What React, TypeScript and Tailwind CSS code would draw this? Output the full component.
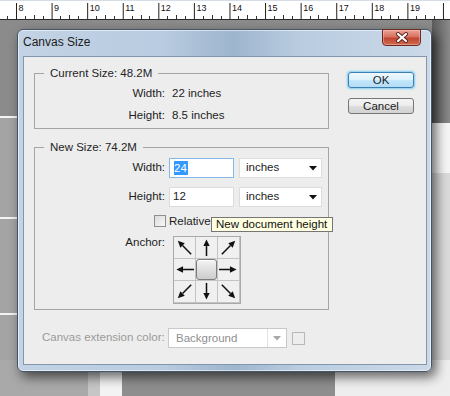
import React from 'react';

// ruler across the top of the document window
function Ruler() {
	const marks: React.ReactNode[] = [];
	for (let n = 7; n <= 20; n++) {
		const x = 16 + (n - 8) * 35.58;
		marks.push(<line key={`m${n}`} x1={x + 0.5} y1={3} x2={x + 0.5} y2={19} stroke="#222" strokeWidth={1} />);
		if (n >= 8 && n <= 19) {
			marks.push(
				<text key={`t${n}`} x={x + 2.5} y={11} fontSize={9} fill="#111" fontFamily="Liberation Sans, Arial, sans-serif">
					{n}
				</text>
			);
		}
		for (let q = 1; q <= 3; q++) {
			const mx = Math.round(x + q * 8.9) + 0.5;
			marks.push(<line key={`q${n}-${q}`} x1={mx} y1={q === 2 ? 15 : 16} x2={mx} y2={19} stroke="#333" strokeWidth={1} />);
		}
	}
	return (
		<div className="h-[20px] bg-white border-t border-[#d6dde6] border-b border-b-[#2a2a2a]">
			<svg width={450} height={18} viewBox="0 1 450 18" className="block">
				{marks}
			</svg>
		</div>
	);
}

// arrow drawn from tail to tip inside a 22x22 anchor cell
function Arrow({ tail, tip }: { tail: [number, number]; tip: [number, number] }) {
	const dx = tip[0] - tail[0];
	const dy = tip[1] - tail[1];
	const len = Math.hypot(dx, dy);
	const ux = dx / len;
	const uy = dy / len;
	const bx = tip[0] - ux * 7;
	const by = tip[1] - uy * 7;
	const nx = -uy * 3.3;
	const ny = ux * 3.3;
	return (
		<svg width="100%" height="100%" viewBox="0 0 22 22" className="block">
			<line x1={tail[0]} y1={tail[1]} x2={bx} y2={by} stroke="#111" strokeWidth={1.6} />
			<polygon points={`${tip[0]},${tip[1]} ${bx + nx},${by + ny} ${bx - nx},${by - ny}`} fill="#111" />
		</svg>
	);
}

type Pt = [number, number];

const cells: ([Pt, Pt] | null)[] = [
	[[18, 18], [4, 4]],
	[[11, 20], [11, 2.5]],
	[[4, 18], [18, 4]],
	[[21, 11], [2.5, 11]],
	null,
	[[1, 11], [19.5, 11]],
	[[18, 4], [4, 18]],
	[[11, 2], [11, 19.5]],
	[[4, 4], [18, 18]],
];

function AnchorGrid() {
	return (
		<div className="grid grid-cols-3 grid-rows-3 w-[68px] h-[68px] border border-[#a9a9a9] bg-[#f0f0f0]">
			{cells.map((c, i) => (
				<div key={i} className="border-r border-b border-[#c4c4c4] flex items-center justify-center">
					{c ? (
						<Arrow tail={c[0]} tip={c[1]} />
					) : (
						<div className="w-[21px] h-[21px] rounded-[3px] border border-[#7d7d7d] bg-[linear-gradient(#f4f4f4,#dcdcdc_60%,#cdcdcd)] shadow-[inset_0_1px_0_#ffffff]" />
					)}
				</div>
			))}
		</div>
	);
}

function DropArrow({ color = '#111' }: { color?: string }) {
	return (
		<svg width="8" height="5" viewBox="0 0 8 5" className="block">
			<polygon points="0,0 8,0 4,4.5" fill={color} />
		</svg>
	);
}

function CloseButton() {
	return (
		<div className="-mt-px mr-[6px] w-[39px] h-[17px] rounded-b-[4px] border border-[#6b2a22] bg-[linear-gradient(#eba497,#d7705f_45%,#c24632_55%,#cf6b4f)] shadow-[inset_0_0_0_1px_rgba(255,200,190,0.45)] flex items-center justify-center">
			<svg width="14" height="11" viewBox="0 0 14 11">
				<path d="M3 2 L11 9 M11 2 L3 9" stroke="#5a2520" strokeWidth={4} strokeLinecap="round" />
				<path d="M3 2 L11 9 M11 2 L3 9" stroke="#ffffff" strokeWidth={2.2} strokeLinecap="round" />
			</svg>
		</div>
	);
}

function Dialog() {
	return (
		<div className="absolute left-[17px] top-[29px] w-[415px] h-[343px] rounded-[6px] border border-[#44566a] bg-[linear-gradient(90deg,#c3d3e5_0%,#b8cbe0_35%,#9eb5ce_52%,#b9cce0_68%,#cbd9e8_100%)] shadow-[inset_0_0_0_1px_rgba(255,255,255,0.55),4px_5px_12px_rgba(0,0,0,0.6)] flex flex-col px-[5px] pb-[6px] pr-[4px]">
			{/* Title bar */}
			<div className="h-[26px] flex items-start justify-between shrink-0">
				<span className="mt-[5px] text-[12px] leading-[14px] text-[#1b1b1b]">Canvas Size</span>
				<CloseButton />
			</div>

			{/* Body */}
			<div className="flex-1 bg-[#ededed] border border-[#8297ad] flex text-[11.5px] text-[#1d1d1d]">
				<div className="pl-[10px] w-[305px] shrink-0">
					{/* Current size */}
					<div className="relative mt-[16px] w-[295px] h-[56px] border border-[#a5a5a5]">
						<span className="absolute left-[9px] -top-[8px] px-[6px] bg-[#ededed] leading-[14px] text-[#252525]">
							Current Size: 48.2M
						</span>
						<div className="pt-[8px] grid grid-cols-[130px_auto] gap-x-[7px] leading-[22px]">
							<span className="text-right">Width:</span>
							<span>22 inches</span>
							<span className="text-right">Height:</span>
							<span>8.5 inches</span>
						</div>
					</div>

					{/* New size */}
					<div className="relative mt-[18px] w-[295px] h-[163px] border border-[#a5a5a5]">
						<span className="absolute left-[9px] -top-[8px] px-[6px] bg-[#ededed] leading-[14px] text-[#252525]">
							New Size: 74.2M
						</span>
						<div className="pt-[10px]">
							<div className="flex items-center h-[20px]">
								<span className="w-[130px] text-right">Width:</span>
								<div className="ml-[4px] w-[65px] h-[20px] border border-[#86b8e6] bg-white flex items-center pl-[4px]">
									<span className="bg-[#3399ff] text-white leading-[14px] pr-[1px]">24</span>
								</div>
								<div className="ml-[5px] w-[83px] h-[20px] border border-[#dcdcdc] bg-white flex items-center justify-between pl-[6px] pr-[4px]">
									<span>inches</span>
									<DropArrow />
								</div>
							</div>
							<div className="flex items-center h-[20px] mt-[9px]">
								<span className="w-[130px] text-right">Height:</span>
								<div className="ml-[4px] w-[65px] h-[20px] border border-[#dcdcdc] bg-white flex items-center pl-[3px]">
									<span>12</span>
								</div>
								<div className="ml-[5px] w-[83px] h-[20px] border border-[#dcdcdc] bg-white flex items-center justify-between pl-[6px] pr-[4px]">
									<span>inches</span>
									<DropArrow />
								</div>
							</div>
							<div className="flex items-center h-[14px] mt-[7px] pl-[119px]">
								<div className="w-[12px] h-[12px] border border-[#8e8f8f] bg-[linear-gradient(135deg,#dcdcdc,#f7f7f7)]" />
								<span className="ml-[3px] leading-[14px]">Relative</span>
							</div>
							<div className="flex items-start mt-[8px]">
								<span className="w-[130px] text-right leading-[12px]">Anchor:</span>
								<div className="ml-[8px]">
									<AnchorGrid />
								</div>
							</div>
						</div>

						{/* Tooltip */}
						<div className="absolute left-[176px] top-[69px] w-[122px] h-[15px] border border-[#767676] bg-[#ffffe1] pl-[4px] leading-[13px] text-[11.5px] text-[#111] whitespace-nowrap z-10">
							New document height
						</div>
					</div>

					{/* Canvas extension color */}
					<div className="mt-[18px] h-[20px] flex items-center">
						<span className="ml-[8px] w-[126px] shrink-0 text-[#9b9b9b] whitespace-nowrap">Canvas extension color:</span>
						<div className="w-[119px] h-[20px] border border-[#c8c8c8] bg-white flex">
							<span className="flex-1 pl-[7px] leading-[18px] text-[#8f8f8f]">Background</span>
							<div className="w-[19px] border-l border-[#e2e2e2] flex items-center justify-center">
								<DropArrow color="#a8a8a8" />
							</div>
						</div>
						<div className="ml-[5px] w-[13px] h-[13px] border border-[#b8b8b8]" />
					</div>
				</div>

				{/* Buttons */}
				<div className="ml-[19px] mt-[15px] flex flex-col">
					<div className="w-[66px] h-[16px] rounded-[3px] border border-[#3c7fb1] bg-[linear-gradient(#eef8fe,#dbf1fd_50%,#c4e7fb_50%,#b2ddf6)] shadow-[0_0_2px_1px_rgba(80,190,240,0.7)] flex items-center justify-center leading-[14px]">
						OK
					</div>
					<div className="mt-[10px] w-[66px] h-[16px] rounded-[3px] border border-[#767676] bg-[linear-gradient(#f4f4f4,#ececec_50%,#dedede_50%,#d2d2d2)] flex items-center justify-center leading-[14px]">
						Cancel
					</div>
				</div>
			</div>
		</div>
	);
}

// grey document pieces behind the dialog
function Backdrop() {
	return (
		<>
			<div className="absolute left-0 top-[20px] w-[450px] h-[96px] bg-[#8b8b8b]" />
			<div className="absolute left-0 top-[116px] w-[30px] h-[2px] bg-[#f4f4f4]" />
			<div className="absolute left-0 top-[217px] w-[30px] h-[2px] bg-[#f4f4f4]" />
			<div className="absolute left-0 top-[313px] w-[30px] h-[2px] bg-[#f4f4f4]" />
			<div className="absolute left-[432px] top-[20px] w-[18px] h-[103px] bg-[linear-gradient(90deg,#5c5c5c,#8a8a8a)]" />
			<div className="absolute left-[432px] top-[123px] w-[18px] h-[50px] bg-[#f5f5f5]" />
			<div className="absolute left-[432px] top-[173px] w-[18px] h-[223px] bg-[#dadada]" />
			<div className="absolute left-0 top-[360px] w-[88px] h-[36px] bg-[#a9a9a9]" />
			<div className="absolute left-[88px] top-[360px] w-[12px] h-[36px] bg-[#c6c6c6]" />
			<div className="absolute left-[100px] top-[360px] w-[22px] h-[36px] bg-[#f3f3f3]" />
			<div className="absolute left-[122px] top-[360px] w-[213px] h-[36px] bg-[#8e8e8e]" />
			<div className="absolute left-[335px] top-[360px] w-[115px] h-[36px] bg-[#eeeeee]" />
		</>
	);
}

export default function App() {
	return (
		<div className="relative w-[450px] h-[396px] overflow-hidden bg-[#a4a4a4] font-['Liberation_Sans',Arial,sans-serif]">
			<Ruler />
			<Backdrop />
			<Dialog />
		</div>
	);
}
